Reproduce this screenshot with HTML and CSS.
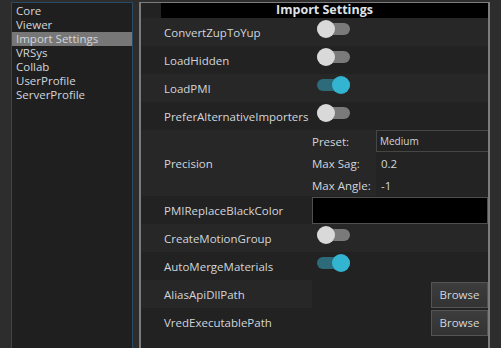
FILE: index.html
```html
<!DOCTYPE html>
<html lang="en">
<head>
    <meta charset="UTF-8">
    <title>Settings</title>
    <link rel="stylesheet" href="styles.css">
</head>
<body>

<div class="window">
    <ul class="categories">
        <li>Core</li>
        <li>Viewer</li>
        <li class="selected">Import Settings</li>
        <li>VRSys</li>
        <li>Collab</li>
        <li>UserProfile</li>
        <li>ServerProfile</li>
    </ul>

    <div class="panel">
        <div class="panel-title">Import Settings</div>

        <div class="row odd">
            <span class="label">ConvertZupToYup</span>
            <div class="control"><span class="toggle"></span></div>
        </div>
        <div class="row">
            <span class="label">LoadHidden</span>
            <div class="control"><span class="toggle"></span></div>
        </div>
        <div class="row odd">
            <span class="label">LoadPMI</span>
            <div class="control"><span class="toggle on"></span></div>
        </div>
        <div class="row">
            <span class="label">PreferAlternativeImporters</span>
            <div class="control"><span class="toggle"></span></div>
        </div>
        <div class="row odd tall">
            <span class="label">Precision</span>
            <div class="precision">
                <span class="sub-label">Preset:</span>
                <span class="combo">Medium</span>
                <span class="sub-label">Max Sag:</span>
                <span class="sub-value">0.2</span>
                <span class="sub-label">Max Angle:</span>
                <span class="sub-value">-1</span>
            </div>
        </div>
        <div class="row">
            <span class="label">PMIReplaceBlackColor</span>
            <div class="control"><span class="swatch"></span></div>
        </div>
        <div class="row odd">
            <span class="label">CreateMotionGroup</span>
            <div class="control"><span class="toggle"></span></div>
        </div>
        <div class="row">
            <span class="label">AutoMergeMaterials</span>
            <div class="control"><span class="toggle on"></span></div>
        </div>
        <div class="row path">
            <span class="label lit">AliasApiDllPath</span>
            <div class="control"><button>Browse</button></div>
        </div>
        <div class="row path">
            <span class="label">VredExecutablePath</span>
            <div class="control"><button>Browse</button></div>
        </div>
    </div>
</div>

</body>
</html>
```

FILE: styles.css
```css
body {
    margin: 0;
    background-color: #2d2d2d;
    font-family: 'Open Sans', 'Noto Sans', sans-serif;
    font-size: 11.5px;
    color: #d2d6dc;
    height: 348px;
    overflow: hidden;
}
.window {
    display: flex;
    padding: 2px 0 0 11px;
}
.categories {
    list-style: none;
    margin: 0;
    padding: 1px 0 0 0;
    width: 120px;
    height: 360px;
    border: 1px solid #2b4a63;
    background-color: #1f1f1f;
}
.categories li {
    height: 14px;
    line-height: 14px;
    padding-left: 4px;
}
.categories li.selected {
    background-color: #777777;
}
.panel {
    margin-left: 6px;
    width: 347px;
    height: 360px;
    border: 1px solid #7c7c7c;
    border-left-width: 2px;
    border-right-width: 2px;
    background-color: #222222;
}
.panel-title {
    margin-left: 20px;
    height: 15px;
    line-height: 14px;
    background-color: #000000;
    text-align: center;
    font-weight: bold;
    font-size: 12.5px;
    color: #dfe3e8;
}
.row {
    display: flex;
    height: 28px;
}
.row.odd {
    background-color: #272727;
}
.row.tall {
    height: 66px;
}
.label {
    width: 148px;
    padding-left: 23px;
    display: flex;
    align-items: center;
}
.label.lit {
    background-color: #272727;
}
.control {
    flex: 1;
    display: flex;
    align-items: center;
}
.toggle {
    position: relative;
    width: 33px;
    height: 12px;
    margin: -6px 0 0 5px;
    border-radius: 6px;
    background-color: #7a7a7a;
}
.toggle::after {
    content: '';
    position: absolute;
    left: 0;
    top: -3px;
    width: 18px;
    height: 18px;
    border-radius: 50%;
    background-color: #d9d9d9;
}
.toggle.on {
    background-color: #2d6b7a;
}
.toggle.on::after {
    left: auto;
    right: 0;
    background-color: #33b4d1;
}
.precision {
    flex: 1;
    display: grid;
    grid-template-columns: 64px 1fr;
    grid-auto-rows: 22px;
}
.sub-label {
    display: flex;
    align-items: center;
}
.combo {
    display: flex;
    align-items: center;
    padding-left: 3px;
    border: 1px solid #464646;
    border-right: none;
    background-color: #222222;
    font-size: 10px;
}
.sub-value {
    display: flex;
    align-items: center;
    padding-left: 5px;
    background-color: #232323;
}
.swatch {
    flex: 1;
    height: 25px;
    border: 1px solid #4f4f4f;
    background-color: #000000;
}
.path .control {
    justify-content: flex-end;
}
button {
    width: 57px;
    height: 26px;
    margin-top: 1px;
    border: 1px solid #545454;
    background: linear-gradient(#3d3d3d, #333333);
    color: #d2d6dc;
    font-family: 'Open Sans', 'Noto Sans', sans-serif;
    font-size: 11.5px;
    padding: 0;
}
```
